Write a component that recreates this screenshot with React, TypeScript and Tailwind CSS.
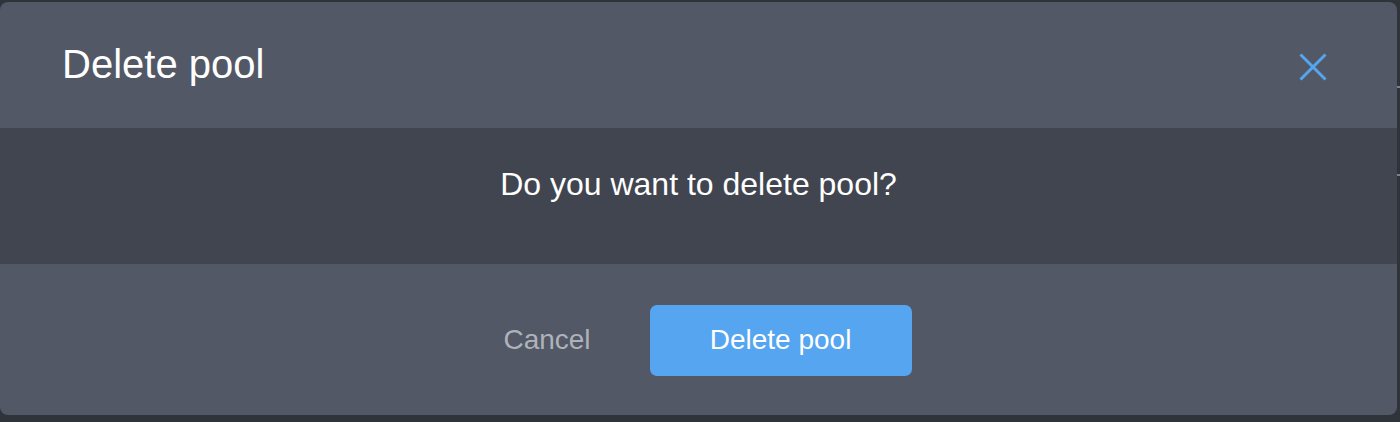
export default function App() {
  return (
    <div
      className="h-[422px] w-[1400px] overflow-hidden bg-[#2f333a] pt-[2px]"
      style={{ fontFamily: '"Liberation Sans", Arial, sans-serif' }}
    >
      <div className="relative flex">
        <section className="flex h-[413px] w-[1397px] flex-col overflow-hidden rounded-[8px] bg-[#525865]">
          <header className="flex h-[126px] shrink-0 items-start justify-between pl-[62px] pr-[70px] pt-[38px]">
            <h2 className="text-[40px] leading-[48px] font-normal text-white">
              Delete pool
            </h2>
            <button
              aria-label="Close"
              className="mt-[13px] flex size-[28px] items-center justify-center"
              type="button"
            >
              <svg className="size-[28px]" viewBox="0 0 28 28" fill="none">
                <path
                  d="M1.5 1.5L26.5 26.5M26.5 1.5L1.5 26.5"
                  stroke="#55a6f1"
                  strokeWidth="3"
                />
              </svg>
            </button>
          </header>

          <div className="flex h-[136px] shrink-0 justify-center bg-[#41454f] pt-[32px]">
            <p className="text-[32px] leading-[48px] text-white">
              Do you want to delete pool?
            </p>
          </div>

          <footer className="flex flex-1 items-center justify-center gap-[35px] pr-[6px] pt-[1px]">
            <button
              className="h-[71px] px-[24px] text-[28px] text-[#aeb2ba]"
              type="button"
            >
              Cancel
            </button>
            <button
              className="h-[71px] w-[262px] rounded-[7px] bg-[#55a5f0] text-[28px] text-white"
              type="button"
            >
              Delete pool
            </button>
          </footer>
        </section>
        <div className="flex flex-col gap-[86px] pt-[84px]">
          <span className="h-[2px] w-[3px] bg-[#7b808a]" />
          <span className="h-[2px] w-[3px] bg-[#7b808a]" />
        </div>
      </div>
    </div>
  )
}
